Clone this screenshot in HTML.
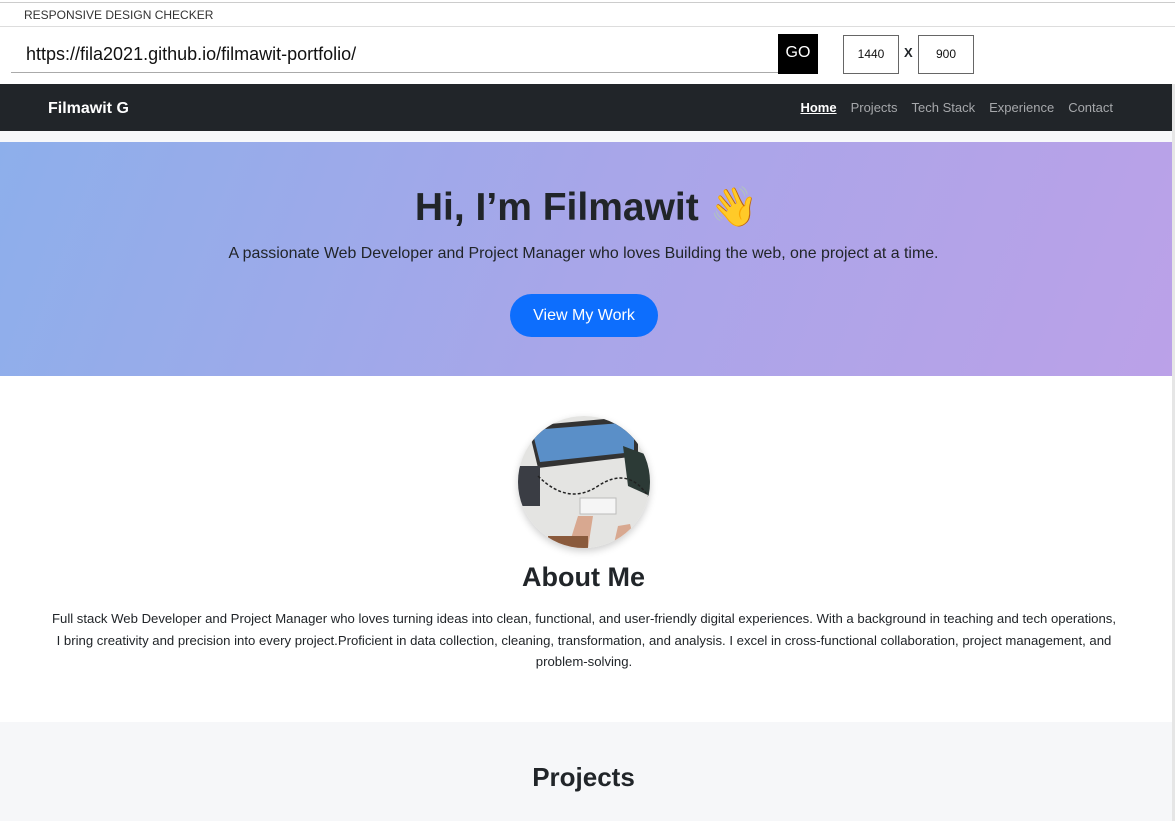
<!DOCTYPE html>
<html><head><meta charset="utf-8"><style>
*{margin:0;padding:0;box-sizing:border-box}
body{width:1175px;height:821px;overflow:hidden;background:#fff;font-family:"Liberation Sans",Arial,sans-serif;color:#212529;position:relative}
.topline{position:absolute;top:2px;left:0;width:1175px;height:1px;background:#ccc}
.title{position:absolute;top:8px;left:24px;font-size:12px;color:#333;letter-spacing:0}
.line2{position:absolute;top:26px;left:0;width:1175px;height:1px;background:#ddd}
.url{position:absolute;top:44px;left:26px;font-size:18px;color:#111}
.urlline{position:absolute;top:72px;left:11px;width:767px;height:1px;background:#aaa}
.go{position:absolute;top:34px;left:778px;width:40px;height:40px;background:#000;color:#fff;font-size:16px;text-align:center;line-height:38px}
.box{position:absolute;top:35px;height:39px;border:1px solid #666;font-size:12px;text-align:center;line-height:37px;color:#111}
.x{position:absolute;top:45px;left:904px;font-size:13px;font-weight:bold}
.frame{position:absolute;top:84px;left:0;width:1172px;height:737px;background:#fff;overflow:hidden}
.sb{position:absolute;top:84px;left:1172px;width:3px;height:737px;background:#e6e6e6}
nav{height:47px;background:#212529;position:relative}
.brand{position:absolute;left:48px;top:16px;color:#fff;font-weight:bold;font-size:16px}
.links{position:absolute;right:59px;top:16px;font-size:13px;color:#a6a8ab}
.links span{margin-left:14px}
.links .a{color:#fff;font-weight:bold;text-decoration:underline}
.gap{height:11px;background:#f7f8fa}
.hero{height:234px;background:linear-gradient(110deg,#8dafeb 0%,#a8a6e9 50%,#bba1e8 100%);text-align:center;position:relative}
.c{position:absolute;left:0;width:1167px;text-align:center}
.hero h1{top:42px;left:3px;font-size:39px;font-weight:bold;color:#212529}
.hero p{top:103px;font-size:15.9px}
.btn{position:absolute;top:152px;left:510px;width:148px;height:43px;background:#0d6efd;color:#fff;border-radius:22px;font-size:16px;line-height:43px}
.about{position:relative;height:346px;text-align:center}
.photo{position:absolute;top:40px;left:518px;width:132px;height:132px;border-radius:50%;overflow:hidden;box-shadow:0 3px 8px rgba(0,0,0,.2)}
.about h2{top:186px;font-size:27px;font-weight:bold}
.about p{position:absolute;top:232px;left:40px;width:1088px;font-size:13.15px;line-height:21.5px;text-align:center}
.proj{height:110px;background:#f6f7f9;text-align:center;position:relative}
.proj h2{top:40px;font-size:26px;font-weight:bold}
</style></head><body>
<div class="topline"></div>
<div class="title">RESPONSIVE DESIGN CHECKER</div>
<div class="line2"></div>
<div class="url">https://fila2021.github.io/filmawit-portfolio/</div>
<div class="urlline"></div>
<div class="go">GO</div>
<div class="box" style="left:843px;width:56px">1440</div>
<div class="x">X</div>
<div class="box" style="left:918px;width:56px">900</div>
<div class="frame">
<nav><div class="brand">Filmawit G</div><div class="links"><span class="a">Home</span><span>Projects</span><span>Tech Stack</span><span>Experience</span><span>Contact</span></div></nav>
<div class="gap"></div>
<div class="hero"><h1 class="c">Hi, I’m Filmawit 👋</h1><p class="c">A passionate Web Developer and Project Manager who loves Building the web, one project at a time.</p><div class="btn">View My Work</div></div>
<div class="about">
<div class="photo"><svg width="132" height="132" viewBox="0 0 132 132"><rect width="132" height="132" fill="#e4e4e2"/><polygon points="10,10 120,0 120,40 20,52" fill="#333"/><polygon points="14,14 116,6 116,36 22,46" fill="#5a8fc8"/><polygon points="105,30 132,40 132,80 110,70" fill="#2c3a36"/><rect x="0" y="50" width="22" height="40" fill="#3a3d44"/><path d="M20 60 Q50 90 80 70 T130 80" stroke="#222" fill="none" stroke-width="1.5" stroke-dasharray="3 2"/><rect x="62" y="82" width="36" height="16" fill="#f5f5f5" stroke="#bbb"/><path d="M50 132 L60 100 L75 100 L70 132Z" fill="#d8a890"/><path d="M95 132 L100 110 L112 108 L118 132Z" fill="#d8a890"/><rect x="30" y="120" width="40" height="12" fill="#8a5a3c"/></svg></div>
<h2 class="c">About Me</h2>
<p>Full stack Web Developer and Project Manager who loves turning ideas into clean, functional, and user-friendly digital experiences. With a background in teaching and tech operations,<br>I bring creativity and precision into every project.Proficient in data collection, cleaning, transformation, and analysis. I excel in cross-functional collaboration, project management, and problem-solving.</p>
</div>
<div class="proj"><h2 class="c">Projects</h2></div>
</div>
<div class="sb"></div>
</body></html>
